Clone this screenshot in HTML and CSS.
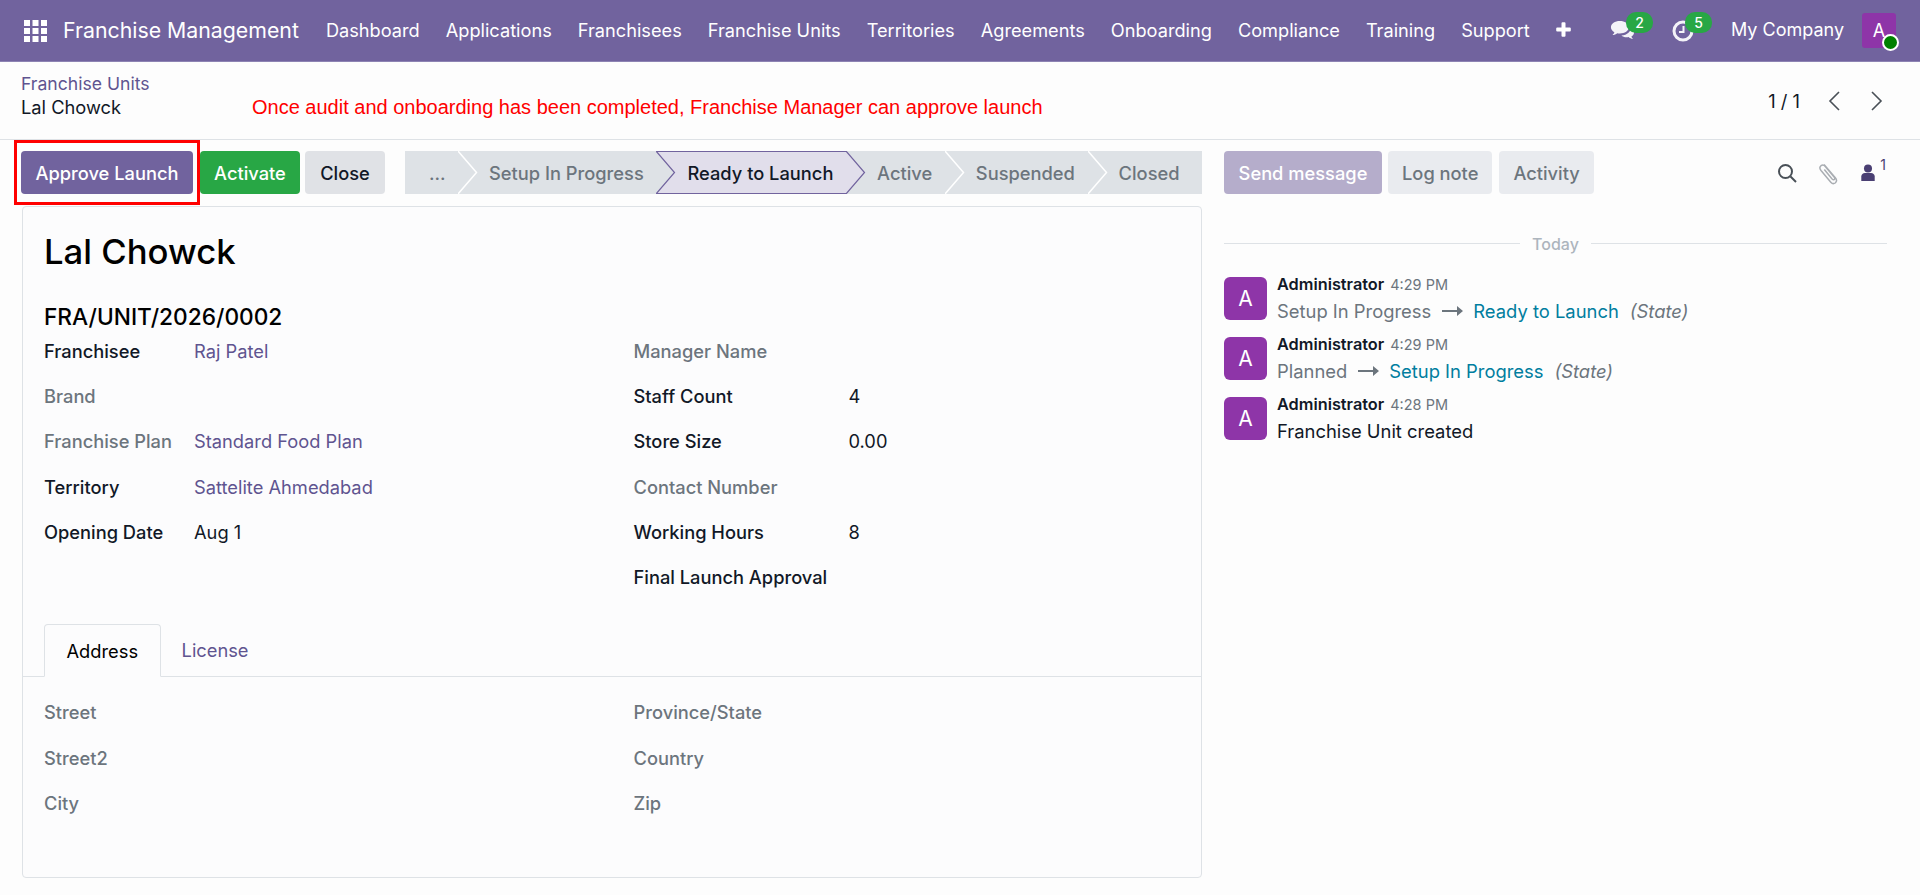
FILE: index.html
```html
<!DOCTYPE html>
<html lang="en">
<head>
    <meta charset="UTF-8">
    <title>Lal Chowck - Franchise Management</title>
    <link rel="stylesheet" href="styles.css">
</head>
<body>
    <header class="navbar">
        <svg class="apps-icon" width="23" height="22" viewBox="0 0 23 22" fill="#fff">
            <rect x="0" y="0" width="6" height="6"/><rect x="8.5" y="0" width="6" height="6"/><rect x="17" y="0" width="6" height="6"/>
            <rect x="0" y="8" width="6" height="6"/><rect x="8.5" y="8" width="6" height="6"/><rect x="17" y="8" width="6" height="6"/>
            <rect x="0" y="16" width="6" height="6"/><rect x="8.5" y="16" width="6" height="6"/><rect x="17" y="16" width="6" height="6"/>
        </svg>
        <span class="brand">Franchise Management</span>
        <nav class="menu">
            <a>Dashboard</a>
            <a>Applications</a>
            <a>Franchisees</a>
            <a>Franchise Units</a>
            <a>Territories</a>
            <a>Agreements</a>
            <a>Onboarding</a>
            <a>Compliance</a>
            <a>Training</a>
            <a>Support</a>
            <a class="menu-plus">
                <svg width="15" height="15" viewBox="0 0 15 15" fill="#fff"><path d="M5.5 1.2a1 1 0 0 1 1-1h2a1 1 0 0 1 1 1v4.3h4.3a1 1 0 0 1 1 1v2a1 1 0 0 1-1 1H9.500v4.300a1 1 0 0 1-1 1h-2a1 1 0 0 1-1-1V9.500H1.200a1 1 0 0 1-1-1v-2a1 1 0 0 1 1-1h4.300z"/></svg>
            </a>
        </nav>
        <div class="systray">
            <div class="tray-icon">
                <svg width="26" height="21" viewBox="0 0 24 20" fill="#f4f3f8">
                    <path d="M9 1C4.300 1 .5 3.600.5 6.900c0 1.900 1.300 3.600 3.300 4.700-.3 1-.9 1.900-1.800 2.700 1.700-.2 3.300-.8 4.500-1.800.8.200 1.600.3 2.500.3 4.700 0 8.500-2.600 8.500-5.900S13.700 1 9 1z"/>
                    <path d="M19.500 7.500c.3 2.900-3.400 6.800-9 7.200 1.100 1 2.900 1.700 4.900 1.700.7 0 1.300-.1 1.900-.2 1 .9 2.600 1.600 4.200 1.800-.8-.7-1.300-1.500-1.500-2.400 1.600-.9 2.500-2.300 2.500-3.800 0-1.700-1.100-3.200-3-4.300z"/>
                </svg>
                <span class="tray-badge">2</span>
            </div>
            <div class="tray-icon tray-clock">
                <svg width="22" height="22" viewBox="0 0 22 22" fill="none" stroke="#f4f3f8" stroke-width="3">
                    <circle cx="11" cy="11" r="9"/>
                    <path d="M11.500 6v6H7" stroke-width="2"/>
                </svg>
                <span class="tray-badge">5</span>
            </div>
            <span class="company">My Company</span>
            <div class="user-avatar">A<span class="online-dot"></span></div>
        </div>
    </header>

    <div class="control-panel">
        <div class="breadcrumb">
            <a class="crumb-link">Franchise Units</a>
            <div class="crumb-row">
                <span class="crumb-current">Lal Chowck</span>
                <span class="annotation">Once audit and onboarding has been completed, Franchise Manager can approve launch</span>
            </div>
        </div>
        <div class="pager">
            <span class="pager-count">1 / 1</span>
            <svg width="14" height="22" viewBox="0 0 14 22" fill="none" stroke="#495057" stroke-width="1.600"><path d="M12 2 3 11l9 9"/></svg>
            <svg width="14" height="22" viewBox="0 0 14 22" fill="none" stroke="#495057" stroke-width="1.600"><path d="m2 2 9 9-9 9"/></svg>
        </div>
    </div>

    <main class="content">
        <section class="form-side">
            <div class="form-actions">
                <div class="highlight-box">
                    <button class="btn btn-primary">Approve Launch</button>
                </div>
                <button class="btn btn-success">Activate</button>
                <button class="btn btn-secondary">Close</button>
                <div class="statusbar">
                    <div class="stage stage-first">...
                        <svg class="stage-arrow" width="20" height="43" viewBox="0 0 20 43"><path d="M0 0 18.500 21.500 0 43" fill="#dee2e6" stroke="#fff" stroke-width="1.500"/></svg>
                    </div>
                    <div class="stage">Setup In Progress
                        <svg class="stage-arrow" width="20" height="43" viewBox="0 0 20 43"><path d="M0 0 18.500 21.500 0 43" fill="#dee2e6" stroke="#71639e" stroke-width="1.200"/></svg>
                    </div>
                    <div class="stage stage-current">Ready to Launch
                        <svg class="stage-arrow" width="20" height="43" viewBox="0 0 20 43"><path d="M0 0 18.500 21.500 0 43" fill="#e1deeb" stroke="#71639e" stroke-width="1.200"/></svg>
                    </div>
                    <div class="stage">Active
                        <svg class="stage-arrow" width="20" height="43" viewBox="0 0 20 43"><path d="M0 0 18.500 21.500 0 43" fill="#dee2e6" stroke="#fff" stroke-width="1.500"/></svg>
                    </div>
                    <div class="stage">Suspended
                        <svg class="stage-arrow" width="20" height="43" viewBox="0 0 20 43"><path d="M0 0 18.500 21.500 0 43" fill="#dee2e6" stroke="#fff" stroke-width="1.500"/></svg>
                    </div>
                    <div class="stage stage-last">Closed</div>
                </div>
            </div>

            <div class="sheet">
                <h1 class="record-name">Lal Chowck</h1>
                <h2 class="record-ref">FRA/UNIT/2026/0002</h2>
                <div class="field-columns">
                    <div class="field-col">
                        <div class="field"><label class="strong">Franchisee</label><a>Raj Patel</a></div>
                        <div class="field"><label>Brand</label></div>
                        <div class="field"><label>Franchise Plan</label><a>Standard Food Plan</a></div>
                        <div class="field"><label class="strong">Territory</label><a>Sattelite Ahmedabad</a></div>
                        <div class="field"><label class="strong">Opening Date</label><span>Aug 1</span></div>
                    </div>
                    <div class="field-col field-col-wide">
                        <div class="field"><label>Manager Name</label></div>
                        <div class="field"><label class="strong">Staff Count</label><span>4</span></div>
                        <div class="field"><label class="strong">Store Size</label><span>0.00</span></div>
                        <div class="field"><label>Contact Number</label></div>
                        <div class="field"><label class="strong">Working Hours</label><span>8</span></div>
                        <div class="field"><label class="strong">Final Launch Approval</label></div>
                    </div>
                </div>

                <div class="tabs">
                    <a class="tab tab-active">Address</a>
                    <a class="tab">License</a>
                </div>
                <div class="field-columns tab-pane">
                    <div class="field-col">
                        <div class="field"><label>Street</label></div>
                        <div class="field"><label>Street2</label></div>
                        <div class="field"><label>City</label></div>
                    </div>
                    <div class="field-col">
                        <div class="field"><label>Province/State</label></div>
                        <div class="field"><label>Country</label></div>
                        <div class="field"><label>Zip</label></div>
                    </div>
                </div>
            </div>
        </section>

        <aside class="chatter">
            <div class="chatter-top">
                <button class="btn btn-send">Send message</button>
                <button class="btn btn-light">Log note</button>
                <button class="btn btn-light">Activity</button>
                <div class="chatter-tools">
                    <svg width="20" height="20" viewBox="0 0 20 20" fill="none" stroke="#495057" stroke-width="2"><circle cx="8.500" cy="8.500" r="6.500"/><path d="m13.500 13.500 5.500 5.500"/></svg>
                    <svg class="tool-clip" width="22" height="24" viewBox="0 0 22 24" fill="none" stroke="#a9adb2" stroke-width="1.500"><path d="M6 3.500 17.500 17c1.800 2.200 1 4-.3 5-1.400 1-3 .8-4.400-.8L3 9.500C1.500 7.600 1.700 5.800 3 4.700c1.300-1 3-.8 4.300.8l9 10.700c.8 1 .6 1.700 0 2.200-.6.500-1.400.4-2.200-.5L6.300 8.500"/></svg>
                    <div class="followers">
                        <svg width="14" height="17" viewBox="0 0 15 19" fill="#4a3f73"><circle cx="7.500" cy="5" r="4.500"/><path d="M0 19v-5c0-2.500 2-4 4-4h7c2 0 4 1.500 4 4v5z"/></svg>
                        <sup>1</sup>
                    </div>
                </div>
            </div>

            <div class="day-sep"><span>Today</span></div>

            <div class="message">
                <div class="msg-avatar">A</div>
                <div class="msg-body">
                    <div class="msg-head"><b>Administrator</b><small>4:29 PM</small></div>
                    <div class="msg-track">
                        <span class="old-val">Setup In Progress</span>
                        <svg class="track-arrow" width="21" height="10" viewBox="0 0 21 10" fill="#6c757d"><path d="M0 4h15V0l6 5-6 5V6H0z"/></svg>
                        <span class="new-val">Ready to Launch</span>
                        <i>(State)</i>
                    </div>
                </div>
            </div>
            <div class="message">
                <div class="msg-avatar">A</div>
                <div class="msg-body">
                    <div class="msg-head"><b>Administrator</b><small>4:29 PM</small></div>
                    <div class="msg-track">
                        <span class="old-val">Planned</span>
                        <svg class="track-arrow" width="21" height="10" viewBox="0 0 21 10" fill="#6c757d"><path d="M0 4h15V0l6 5-6 5V6H0z"/></svg>
                        <span class="new-val">Setup In Progress</span>
                        <i>(State)</i>
                    </div>
                </div>
            </div>
            <div class="message">
                <div class="msg-avatar">A</div>
                <div class="msg-body">
                    <div class="msg-head"><b>Administrator</b><small>4:28 PM</small></div>
                    <div class="msg-track"><span>Franchise Unit created</span></div>
                </div>
            </div>
        </aside>
    </main>
</body>
</html>
```

FILE: styles.css
```css
* {
    box-sizing: border-box;
}
body {
    margin: 0;
    height: 895px;
    overflow: hidden;
    font-family: Inter, "Noto Sans", sans-serif;
    font-size: 18.3px;
    color: #111827;
    background: #fdfdfd;
}

/* top bar */
.navbar {
    display: flex;
    align-items: center;
    height: 62px;
    padding-left: 24px;
    background: #71639e;
    border-bottom: 1px solid #8d83b3;
    color: #fff;
}
.brand {
    margin: 0 0 2px 16px;
    font-size: 21.300px;
    white-space: nowrap;
}
.menu {
    display: flex;
    align-items: center;
    margin: 0 0 2px 14px;
    font-size: 18.200px;
}
.menu a {
    padding: 0 13px;
    white-space: nowrap;
}
.menu-plus {
    display: flex;
}
.systray {
    display: flex;
    align-items: center;
    margin-left: auto;
    padding-right: 24px;
}
.tray-icon {
    position: relative;
    display: flex;
    width: 62px;
}
.tray-icon svg {
    margin-left: 1px;
}
.tray-clock {
    width: 60px;
}
.tray-badge {
    position: absolute;
    left: 17px;
    top: -8px;
    width: 27px;
    height: 21px;
    border-radius: 10px;
    background: #28a745;
    color: #fff;
    font-size: 14px;
    font-weight: 500;
    line-height: 21px;
    text-align: center;
}
.tray-clock .tray-badge {
    left: 14px;
}
.company {
    margin-bottom: 2px;
    font-size: 18px;
    white-space: nowrap;
}
.user-avatar {
    position: relative;
    width: 34px;
    height: 35px;
    margin-left: 18px;
    border-radius: 3px;
    background: #8e35a8;
    font-size: 18px;
    line-height: 35px;
    text-align: center;
}
.online-dot {
    position: absolute;
    right: -3px;
    bottom: -3px;
    width: 17px;
    height: 17px;
    border-radius: 50%;
    background: #008000;
    border: 2px solid #fff;
}

/* breadcrumb row */
.control-panel {
    display: flex;
    justify-content: space-between;
    align-items: center;
    height: 78px;
    padding: 0 21px;
    border-bottom: 1px solid #dee2e6;
    background: #fdfdfd;
}
.breadcrumb {
    padding-bottom: 11px;
}
.crumb-link {
    display: block;
    color: #5f5490;
    font-size: 17.600px;
    line-height: 23px;
}
.crumb-row {
    display: flex;
    align-items: center;
    line-height: 24px;
}
.crumb-current {
    width: 231px;
}
.annotation {
    font-family: "Liberation Sans", Arial, sans-serif;
    font-size: 20px;
    color: #f00;
}
.pager {
    display: flex;
    align-items: center;
    gap: 29px;
    padding-right: 15px;
}
.pager-count {
    margin-right: -2px;
}

/* main area */
.content {
    display: flex;
}
.form-side {
    width: 1224px;
    padding: 11px 0 0 21px;
}
.form-actions {
    display: flex;
    align-items: center;
    height: 43px;
}
.btn {
    height: 43px;
    padding: 0 14px;
    border: 0;
    border-radius: 4px;
    font-family: inherit;
    font-size: 18.300px;
    font-weight: 500;
    white-space: nowrap;
}
.highlight-box {
    display: flex;
    margin: -11px 0 -11px -7px;
    padding: 8px 4px 8px 4px;
    border: 3px solid #f00;
}
.btn-primary {
    width: 172px;
    background: #71639e;
    color: #fff;
}
.btn-success {
    width: 100px;
    background: #28a745;
    color: #fff;
}
.btn-secondary {
    width: 80px;
    margin-left: 5px;
    background: #e0e2e6;
    color: #111827;
}
.statusbar {
    display: flex;
    height: 43px;
    margin-left: 20px;
    color: #6c757d;
    font-weight: 500;
}
.stage {
    position: relative;
    display: flex;
    align-items: center;
    padding: 0 12.700px 0 31px;
    background: #dee2e6;
    white-space: nowrap;
}
.stage-first {
    padding: 0 0 0 24px;
    width: 53px;
}
.stage-last {
    padding-right: 22px;
}
.stage-current {
    background: #e1deeb;
    color: #111827;
    border-top: 1px solid #71639e;
    border-bottom: 1px solid #71639e;
}
.stage-arrow {
    position: absolute;
    left: 100%;
    top: 0;
    z-index: 1;
}
.stage-current .stage-arrow {
    top: -1px;
}

/* form sheet */
.sheet {
    height: 672px;
    margin-top: 12px;
    width: 1180px;
    margin-left: 1px;
    padding-top: 20px;
    border: 1px solid #dee2e6;
    border-radius: 4px;
    background: #fcfcfd;
}
.record-name {
    margin: 0 21px;
    font-size: 34.700px;
    font-weight: 500;
    line-height: 48px;
    color: #000;
}
.record-ref {
    margin: 31px 21px 0;
    font-size: 22.700px;
    font-weight: 500;
    line-height: 22px;
    color: #000;
}
.field-columns {
    display: flex;
    padding: 0 21px;
}
.field-col {
    flex: none;
    width: 589.500px;
}
.field {
    display: flex;
    align-items: center;
    height: 45.300px;
    white-space: nowrap;
}
.field label {
    width: 150px;
    color: #6c757d;
    font-weight: 500;
}
.field label.strong {
    color: #111827;
}
.field-col-wide .field label {
    width: 215px;
}
.field a {
    color: #5f5490;
}
.tabs {
    display: flex;
    height: 53px;
    margin-top: 24px;
    padding-left: 21px;
    border-bottom: 1px solid #dee2e6;
}
.tab {
    padding: 0 21px;
    line-height: 53px;
    color: #5f5490;
}
.tab-active {
    height: 53px;
    padding: 0 21.500px;
    border: 1px solid #dee2e6;
    border-bottom-color: #fcfcfd;
    border-radius: 4px 4px 0 0;
    color: #000;
}
.tab-pane {
    padding-top: 13px;
}

/* chatter */
.chatter {
    flex: 1;
    padding: 11px 33px 0 0;
}
.chatter-top {
    display: flex;
    align-items: center;
    gap: 7px;
}
.btn-send {
    width: 158px;
    margin-right: -1px;
    background: #b5adcb;
    color: #fff;
}
.btn-light {
    background: #e9ebef;
    color: #6c757d;
}
.chatter-tools {
    display: flex;
    align-items: center;
    gap: 21px;
    margin-left: auto;
    padding-right: 1px;
}
.followers {
    display: flex;
    color: #4a3f73;
    font-size: 14px;
}
.followers sup {
    margin: -8px 0 0 5px;
    font-size: 14px;
}
.day-sep {
    display: flex;
    align-items: center;
    gap: 12px;
    margin-top: 39.500px;
    color: #adb5bd;
    font-size: 16px;
    font-weight: 500;
}
.day-sep::before,
.day-sep::after {
    content: "";
    flex: 1;
    height: 1px;
    background: #dee2e6;
}
.message {
    display: flex;
    gap: 10px;
    height: 60px;
}
.day-sep + .message {
    margin-top: 23.500px;
}
.msg-avatar {
    width: 43px;
    height: 43px;
    border-radius: 6px;
    background: #8e35a8;
    color: #fff;
    font-size: 21px;
    line-height: 43px;
    text-align: center;
}
.msg-head {
    margin-top: -3px;
    font-size: 16.300px;
    line-height: 20px;
}
.msg-head b {
    font-weight: 600;
}
.msg-head small {
    margin-left: 6px;
    font-size: 14.500px;
    color: #6c757d;
}
.msg-track {
    display: flex;
    align-items: center;
    margin-top: 3.800px;
    font-size: 18.400px;
    line-height: 24px;
}
.old-val {
    color: #6c757d;
}
.track-arrow {
    margin: 0 10px 0 11px;
}
.new-val {
    color: #017e9f;
}
.msg-track i {
    margin-left: 11px;
    color: #6c757d;
}
```
